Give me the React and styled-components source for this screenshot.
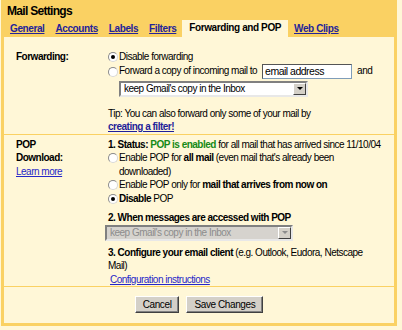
import React from "react";
import styled, { createGlobalStyle } from "styled-components";

const orange = "#fad163";
const pale = "#fff7d7";

const GlobalStyle = createGlobalStyle`
  html, body {
    margin: 0;
    padding: 0;
    background: ${pale};
  }
  body {
    font-family: "Liberation Sans", Arial, sans-serif;
    font-size: 10px;
    letter-spacing: -0.5px;
    color: #000;
  }
`;

const Frame = styled.div`
  width: 396px;
  margin-left: 1px;
  box-sizing: border-box;
  background: ${orange};
  padding: 0 3px 3px 3px;
`;

const Title = styled.div`
  font-size: 12px;
  font-weight: bold;
  letter-spacing: -0.7px;
  line-height: 18px;
  padding: 2px 0 0 3px;
`;

const Tabs = styled.div`
  display: flex;
  align-items: flex-end;
  height: 17px;
  padding-left: 1px;
`;

const Tab = styled.a`
  display: block;
  padding: 0 ${(p) => (p.$active ? 7 : 5)}px;
  margin-right: 1px;
  line-height: 16px;
  font-weight: bold;
  letter-spacing: -0.4px;
  color: ${(p) => (p.$active ? "#000" : "#23239a")};
  text-decoration: ${(p) => (p.$active ? "none" : "underline")};
  background: ${(p) => (p.$active ? pale : "transparent")};
  height: ${(p) => (p.$active ? "17px" : "16px")};
`;

const Panel = styled.div`
  background: ${pale};
`;

const Section = styled.div`
  display: grid;
  grid-template-columns: 92px 1fr;
  padding: ${(p) => p.$pad || "0"};
  padding-left: 12px;
  padding-right: 2px;
  border-bottom: 1px solid ${orange};
  line-height: 13.5px;
`;

const Label = styled.div`
  font-weight: bold;
`;

const Link = styled.a`
  color: ${(p) => (p.$bold ? "#1f1f99" : "#2626c8")};
  text-decoration: underline;
  font-weight: ${(p) => (p.$bold ? "bold" : "normal")};
`;

const Option = styled.div`
  display: flex;
  align-items: ${(p) => (p.$center ? "center" : "flex-start")};
  ${(p) => p.$center && "height: 16px; margin: 0 0 1px;"}
`;

const RadioDot = styled.span`
  flex: none;
  box-sizing: border-box;
  width: 10px;
  height: 10px;
  margin: ${(p) => (p.$center ? "0" : "2px")} 1px 0 0;
  border-radius: 50%;
  border: 1px solid #8a8a8a;
  border-right-color: #d8d8d8;
  border-bottom-color: #d8d8d8;
  background: #fff;
  display: flex;
  align-items: center;
  justify-content: center;
  &::after {
    content: "";
    display: ${(p) => (p.$on ? "block" : "none")};
    width: 4px;
    height: 4px;
    border-radius: 50%;
    background: #000;
  }
`;

const OptText = styled.span`
  flex: 1;
`;

const TextBox = styled.div`
  box-sizing: border-box;
  width: 90px;
  height: 15px;
  margin: 0 5px 0 5px;
  border: 1px solid #7f9db9;
  border-top-color: #555;
  border-left-color: #555;
  background: #fff;
  font-size: 10.5px;
  line-height: 13px;
  padding-left: 2px;
`;

const Select = styled.div`
  box-sizing: border-box;
  display: flex;
  width: ${(p) => p.$w}px;
  height: 16px;
  margin-left: ${(p) => p.$ml || 0}px;
  border: 2px solid #808080;
  border-right-color: #e8e8e8;
  border-bottom-color: #e8e8e8;
  background: ${(p) => (p.$disabled ? "#d6d3ce" : "#fff")};
  color: ${(p) => (p.$disabled ? "#8c8c8c" : "#000")};
`;

const SelectText = styled.span`
  flex: 1;
  line-height: 12px;
  padding-left: 3px;
  white-space: nowrap;
  overflow: hidden;
`;

const SelectArrow = styled.span`
  box-sizing: border-box;
  flex: none;
  width: 13px;
  height: 12px;
  background: #d4d0c8;
  border: 1px solid #fff;
  border-right-color: #404040;
  border-bottom-color: #404040;
  display: flex;
  align-items: center;
  justify-content: center;
  &::after {
    content: "";
    border-left: 3px solid transparent;
    border-right: 3px solid transparent;
    border-top: 3px solid ${(p) => (p.$disabled ? "#8c8c8c" : "#000")};
  }
`;

const Tip = styled.div`
  margin-top: 10px;
`;

const Step = styled.div`
  margin-top: ${(p) => p.$mt || 0}px;
  margin-left: ${(p) => p.$ml || 0}px;
  white-space: nowrap;
`;

const Green = styled.b`
  color: #168a16;
`;

const Buttons = styled.div`
  display: flex;
  justify-content: center;
  gap: 7px;
  padding: 9px 0 10px;
`;

const Button = styled.button`
  box-sizing: border-box;
  height: 17px;
  padding: 0 7px;
  font-family: inherit;
  font-size: 10px;
  letter-spacing: -0.4px;
  color: #000;
  background: #d4d0c8;
  border: 1px solid #fff;
  border-right-color: #404040;
  border-bottom-color: #404040;
  box-shadow: inset -1px -1px 0 #808080;
`;

const Radio = ({ on, center, children }) => (
  <Option $center={center}>
    <RadioDot $on={on} $center={center} />
    <OptText>{children}</OptText>
  </Option>
);

export default function App() {
  const tabs = ["General", "Accounts", "Labels", "Filters", "Forwarding and POP", "Web Clips"];
  return (
    <>
      <GlobalStyle />
      <Frame>
        <Title>Mail Settings</Title>
        <Tabs>
          {tabs.map((t) => (
            <Tab key={t} $active={t === "Forwarding and POP"}>
              {t}
            </Tab>
          ))}
        </Tabs>
        <Panel>
          <Section $pad="13px 0 0">
            <Label>Forwarding:</Label>
            <div>
              <Radio on>Disable forwarding</Radio>
              <Radio center>
                <Option $center>
                  Forward a copy of incoming mail to
                  <TextBox>email address</TextBox>
                  and
                </Option>
              </Radio>
              <Select $w={189} $ml={11}>
                <SelectText>keep Gmail's copy in the Inbox</SelectText>
                <SelectArrow />
              </Select>
              <Tip>
                Tip: You can also forward only some of your mail by
                <br />
                <Link $bold>creating a filter!</Link>
              </Tip>
            </div>
          </Section>
          <Section $pad="3px 0 0">
            <Label>
              POP
              <br />
              Download:
              <br />
              <Link>Learn more</Link>
            </Label>
            <div>
              <Step>
                <b>1. Status: </b>
                <Green>POP is enabled</Green> for all mail that has arrived since 11/10/04
              </Step>
              <Radio>
                Enable POP for <b>all mail</b> (even mail that's already been
                <br />
                downloaded)
              </Radio>
              <Radio>
                Enable POP only for <b>mail that arrives from now on</b>
              </Radio>
              <Radio on>
                <b>Disable</b> POP
              </Radio>
              <Step $mt={6}>
                <b>2. When messages are accessed with POP</b>
              </Step>
              <Select $w={188} $ml={-3} $disabled>
                <SelectText>keep Gmail's copy in the Inbox</SelectText>
                <SelectArrow $disabled />
              </Select>
              <Step $mt={5}>
                <b>3. Configure your email client</b> (e.g. Outlook, Eudora, Netscape
                <br />
                Mail)
              </Step>
              <Step $ml={2}>
                <Link>Configuration instructions</Link>
              </Step>
            </div>
          </Section>
          <Buttons>
            <Button>Cancel</Button>
            <Button>Save Changes</Button>
          </Buttons>
        </Panel>
      </Frame>
    </>
  );
}
